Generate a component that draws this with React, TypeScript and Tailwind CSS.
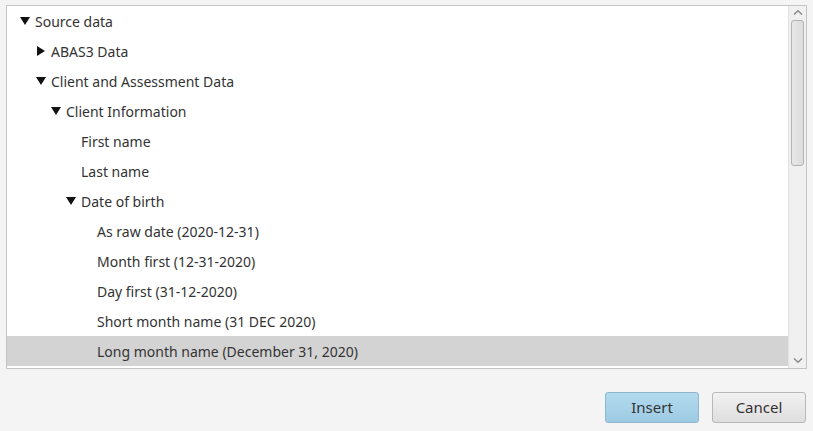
import React from "react";

type Row = { label: string; level: number; arrow?: "down" | "right"; selected?: boolean };

const rows: Row[] = [
  { label: "Source data", level: 0, arrow: "down" },
  { label: "ABAS3 Data", level: 1, arrow: "right" },
  { label: "Client and Assessment Data", level: 1, arrow: "down" },
  { label: "Client Information", level: 2, arrow: "down" },
  { label: "First name", level: 3 },
  { label: "Last name", level: 3 },
  { label: "Date of birth", level: 3, arrow: "down" },
  { label: "As raw date (2020-12-31)", level: 4 },
  { label: "Month first (12-31-2020)", level: 4 },
  { label: "Day first (31-12-2020)", level: 4 },
  { label: "Short month name (31 DEC 2020)", level: 4 },
  { label: "Long month name (December 31, 2020)", level: 4, selected: true },
];

const textX = [35, 51, 66, 81, 97];

function Arrow({ dir }: { dir: "down" | "right" }) {
  if (dir === "down") {
    return (
      <svg width="10" height="8" viewBox="0 0 10 8" className="block">
        <polygon points="0,0 10,0 5,8" fill="#111" />
      </svg>
    );
  }
  return (
    <svg width="8" height="10" viewBox="0 0 8 10" className="block">
      <polygon points="0,0 8,5 0,10" fill="#111" />
    </svg>
  );
}

export default function App() {
  return (
    <div
      className="w-[813px] h-[431px] bg-[#f4f4f4] flex flex-col"
      style={{ fontFamily: '"Noto Sans", "Open Sans", sans-serif' }}
    >
      <div className="ml-[6px] mt-[5px] w-[801px] h-[364px] border border-[#c4c4c4] bg-white flex">
        <div className="flex-1 flex flex-col overflow-hidden">
          {rows.map((r, i) => (
            <div
              key={i}
              className={`h-[30px] shrink-0 flex items-center text-[14px] text-[#333333] ${
                r.selected ? "bg-[#d3d3d3]" : ""
              }`}
              style={{ paddingLeft: textX[r.level] - 7 }}
            >
              <span className="relative">
                {r.arrow && (
                  <span
                    className={`absolute top-1/2 -translate-y-1/2 ${
                      r.arrow === "down" ? "left-[-15px]" : "left-[-14px]"
                    }`}
                  >
                    <Arrow dir={r.arrow} />
                  </span>
                )}
                {r.label}
              </span>
            </div>
          ))}
        </div>
        <div className="w-[18px] bg-[#f0f0f0] border-l border-[#e2e2e2] flex flex-col items-center">
          <svg width="10" height="5" viewBox="0 0 10 5" className="mt-[4px]">
            <polyline points="1,4.5 5,0.8 9,4.5" fill="none" stroke="#8a8a8a" strokeWidth="1.5" />
          </svg>
          <div className="mt-[5px] w-[13px] h-[146px] rounded-[3px] border border-[#b4b4b4] bg-gradient-to-r from-[#e8e8e8] to-[#dcdcdc]" />
          <div className="flex-1" />
          <svg width="10" height="5" viewBox="0 0 10 5" className="mb-[5px]">
            <polyline points="1,0.5 5,4.2 9,0.5" fill="none" stroke="#8a8a8a" strokeWidth="1.5" />
          </svg>
        </div>
      </div>
      <div className="flex justify-end gap-[13px] pr-[7px] mt-[23px]">
        <button className="w-[94px] h-[31px] rounded-[3px] border border-[#8fb6cc] bg-gradient-to-b from-[#b2daee] to-[#9ecbe3] text-[15px] text-[#333333]">
          Insert
        </button>
        <button className="w-[94px] h-[31px] rounded-[3px] border border-[#b8b8b8] bg-gradient-to-b from-[#f2f2f2] to-[#dedede] text-[15px] text-[#333333]">
          Cancel
        </button>
      </div>
    </div>
  );
}
